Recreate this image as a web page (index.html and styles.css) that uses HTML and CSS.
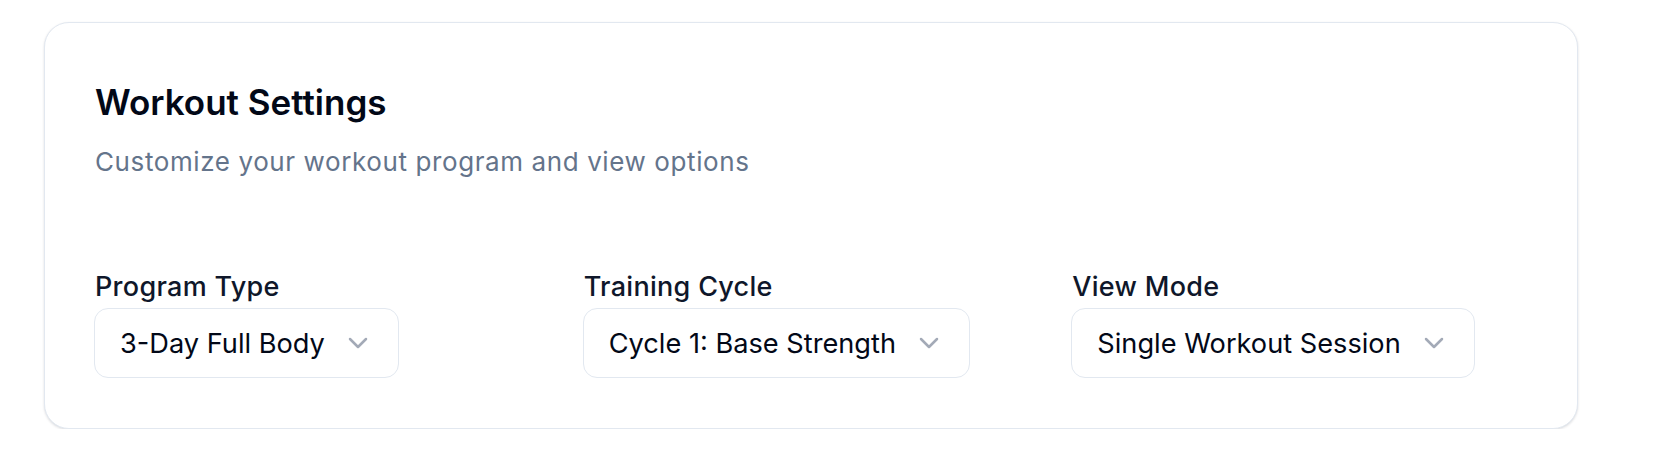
FILE: index.html
```html
<!DOCTYPE html>
<html lang="en">
<head>
<meta charset="utf-8">
<title>Workout Settings</title>
<link rel="stylesheet" href="styles.css">
</head>
<body>
<div class="page">
  <section class="card">
    <header class="card-header">
      <h2 class="card-title">Workout Settings</h2>
      <p class="card-desc">Customize your workout program and view options</p>
    </header>
    <div class="fields">
      <div class="field">
        <label class="field-label">Program Type</label>
        <button class="select" type="button">
          <span class="select-value">3-Day Full Body</span>
          <svg class="chevron" width="20" height="12" viewBox="0 0 20 12"><polyline points="2,2 10,10 18,2" /></svg>
        </button>
      </div>
      <div class="field">
        <label class="field-label">Training Cycle</label>
        <button class="select" type="button">
          <span class="select-value">Cycle 1: Base Strength</span>
          <svg class="chevron" width="20" height="12" viewBox="0 0 20 12"><polyline points="2,2 10,10 18,2" /></svg>
        </button>
      </div>
      <div class="field">
        <label class="field-label">View Mode</label>
        <button class="select" type="button">
          <span class="select-value">Single Workout Session</span>
          <svg class="chevron" width="20" height="12" viewBox="0 0 20 12"><polyline points="2,2 10,10 18,2" /></svg>
        </button>
      </div>
    </div>
  </section>
</div>
</body>
</html>
```

FILE: styles.css
```css
* { box-sizing: border-box; }
html, body { margin: 0; padding: 0; background: #ffffff; }
body { font-family: Inter, "Noto Sans", "Liberation Sans", sans-serif; color: #020817; }

.page {
  padding: 22px 0 0 44px;
}

.card {
  width: 1534px;
  height: 407px;
  border: 1px solid #e2e8f0;
  border-radius: 25px;
  background: #fff;
  box-shadow: 0 1px 3px rgba(15, 23, 42, 0.09), 0 1px 2px rgba(15, 23, 42, 0.06);
  padding: 62px 50px 50px 49px;
  display: flex;
  flex-direction: column;
}

.card-header {
  display: flex;
  flex-direction: column;
  gap: 24px;
  padding-left: 1px;
}

.card-title {
  margin: 0;
  font-size: 35px;
  line-height: 35px;
  font-weight: 600;
  letter-spacing: 0;
  color: #020817;
}

.card-desc {
  margin: 0;
  font-size: 26px;
  line-height: 35px;
  letter-spacing: 0.6px;
  color: #64748b;
}

.fields {
  margin-top: auto;
  display: grid;
  grid-template-columns: repeat(3, 1fr);
  column-gap: 33px;
}

.field {
  display: flex;
  flex-direction: column;
  align-items: flex-start;
  gap: 4px;
}

.field-label {
  padding-left: 1px;
  font-size: 27px;
  line-height: 34px;
  font-weight: 500;
  letter-spacing: 0.3px;
  color: #0f172a;
}

.select {
  display: flex;
  align-items: center;
  gap: 23px;
  height: 70px;
  padding: 0 30px 0 25px;
  border: 1px solid #e2e8f0;
  border-radius: 14px;
  background: #fff;
  font-family: inherit;
  font-size: 27.2px;
  color: #020817;
  cursor: pointer;
}

.select-value { white-space: nowrap; }

.chevron {
  flex: none;
  fill: none;
  stroke: #a3aab7;
  stroke-width: 2.5;
  stroke-linecap: round;
  stroke-linejoin: round;
}
```
